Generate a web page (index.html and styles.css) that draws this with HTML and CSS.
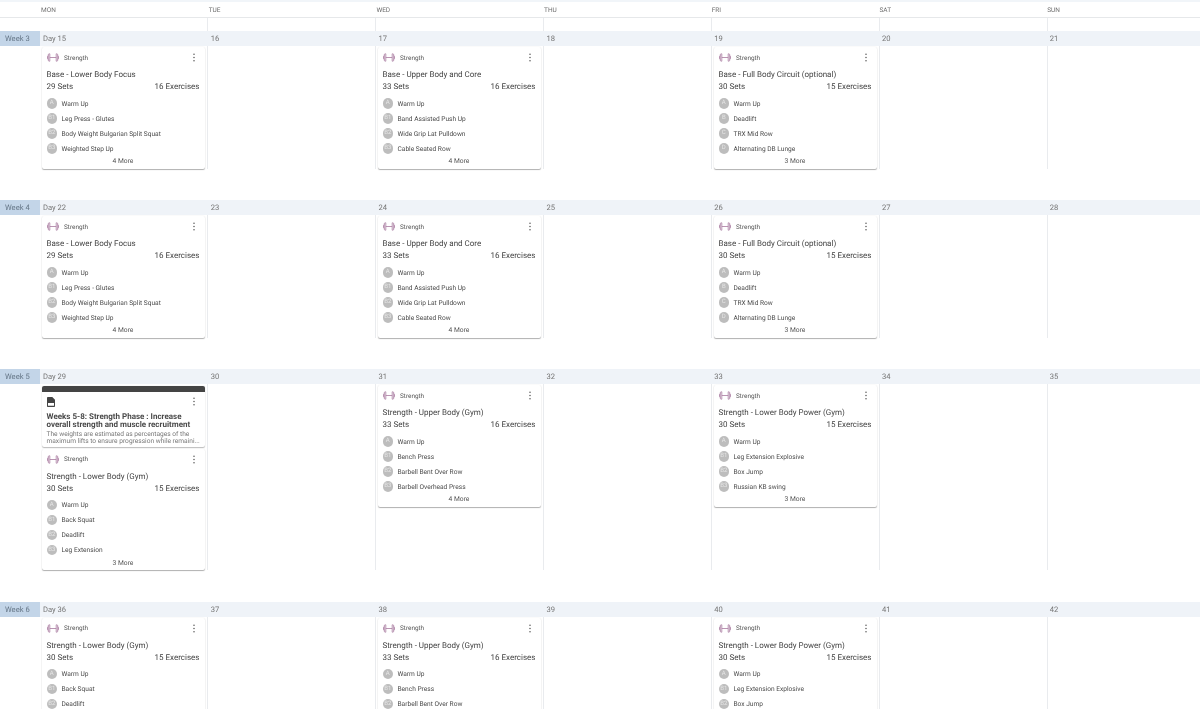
FILE: index.html
```html
<!DOCTYPE html>
<html lang="en">
<head>
<meta charset="utf-8">
<title>Training calendar</title>
<link rel="stylesheet" href="styles.css">
</head>
<body>
<svg class="defs" width="0" height="0" aria-hidden="true">
  <symbol id="bell" viewBox="0 0 12 9">
    <path d="M2.800 .8H2.200C1.500 .8 1.300 1.300 1.300 1.800V7.200C1.300 7.700 1.500 8.200 2.200 8.200H2.800V.8ZM1.300 2.800C.7 2.800 .5 3.200 .5 3.600V5.400C.5 5.800 .7 6.200 1.300 6.200M9.200 .8H9.800C10.500 .8 10.700 1.300 10.700 1.800V7.200C10.700 7.700 10.500 8.200 9.800 8.200H9.200V.8ZM10.700 2.800C11.300 2.800 11.500 3.200 11.500 3.600V5.400C11.500 5.800 11.300 6.200 10.700 6.200M2.800 4.500H9.200" fill="none" stroke="currentColor" stroke-width=".8"/>
  </symbol>
  <symbol id="kebab" viewBox="0 0 4 12">
    <circle cx="2" cy="1.600" r="1"/><circle cx="2" cy="6" r="1"/><circle cx="2" cy="10.400" r="1"/>
  </symbol>
  <symbol id="doc" viewBox="0 0 8 10">
    <path d="M.8 0H5.300L8 2.700V9.200C8 9.700 7.700 10 7.200 10H.8C.3 10 0 9.700 0 9.200V.8C0 .3 .3 0 .8 0ZM1 6V8.800H7V6Z" fill-rule="evenodd"/>
  </symbol>
</svg>

<div class="head">
  <div></div>
  <div class="day-name">Mon</div><div class="day-name">Tue</div><div class="day-name">Wed</div><div class="day-name">Thu</div><div class="day-name">Fri</div><div class="day-name">Sat</div><div class="day-name">Sun</div>
</div>
<div class="gap"><div></div><div class="c"></div><div class="c lined"></div><div class="c lined"></div><div class="c lined"></div><div class="c lined"></div><div class="c lined"></div><div class="c lined"></div></div>

<section class="week">
  <div class="bar"><div class="wk">Week 3</div><div class="dn">Day 15</div><div class="dn">16</div><div class="dn">17</div><div class="dn">18</div><div class="dn">19</div><div class="dn">20</div><div class="dn">21</div></div>
  <div class="body">
    <div></div>
    <div class="c">
      <article class="card"><div class="top"><svg class="bell"><use href="#bell"/></svg><span>Strength</span><svg class="kebab"><use href="#kebab"/></svg></div><h3>Base - Lower Body Focus</h3><div class="meta"><span>29 Sets</span><span>16 Exercises</span></div><ul><li><b>A</b>Warm Up</li><li><b>B1</b>Leg Press - Glutes</li><li><b>B2</b>Body Weight Bulgarian Split Squat</li><li><b>B3</b>Weighted Step Up</li></ul><p class="more">4 More</p></article>
    </div>
    <div class="c lined"></div>
    <div class="c lined">
      <article class="card"><div class="top"><svg class="bell"><use href="#bell"/></svg><span>Strength</span><svg class="kebab"><use href="#kebab"/></svg></div><h3>Base - Upper Body and Core</h3><div class="meta"><span>33 Sets</span><span>16 Exercises</span></div><ul><li><b>A</b>Warm Up</li><li><b>B1</b>Band Assisted Push Up</li><li><b>B2</b>Wide Grip Lat Pulldown</li><li><b>B3</b>Cable Seated Row</li></ul><p class="more">4 More</p></article>
    </div>
    <div class="c lined"></div>
    <div class="c lined">
      <article class="card"><div class="top"><svg class="bell"><use href="#bell"/></svg><span>Strength</span><svg class="kebab"><use href="#kebab"/></svg></div><h3>Base - Full Body Circuit (optional)</h3><div class="meta"><span>30 Sets</span><span>15 Exercises</span></div><ul><li><b>A</b>Warm Up</li><li><b>B</b>Deadlift</li><li><b>C</b>TRX Mid Row</li><li><b>D</b>Alternating DB Lunge</li></ul><p class="more">3 More</p></article>
    </div>
    <div class="c lined"></div>
    <div class="c lined"></div>
  </div>
</section>

<section class="week">
  <div class="bar"><div class="wk">Week 4</div><div class="dn">Day 22</div><div class="dn">23</div><div class="dn">24</div><div class="dn">25</div><div class="dn">26</div><div class="dn">27</div><div class="dn">28</div></div>
  <div class="body">
    <div></div>
    <div class="c">
      <article class="card"><div class="top"><svg class="bell"><use href="#bell"/></svg><span>Strength</span><svg class="kebab"><use href="#kebab"/></svg></div><h3>Base - Lower Body Focus</h3><div class="meta"><span>29 Sets</span><span>16 Exercises</span></div><ul><li><b>A</b>Warm Up</li><li><b>B1</b>Leg Press - Glutes</li><li><b>B2</b>Body Weight Bulgarian Split Squat</li><li><b>B3</b>Weighted Step Up</li></ul><p class="more">4 More</p></article>
    </div>
    <div class="c lined"></div>
    <div class="c lined">
      <article class="card"><div class="top"><svg class="bell"><use href="#bell"/></svg><span>Strength</span><svg class="kebab"><use href="#kebab"/></svg></div><h3>Base - Upper Body and Core</h3><div class="meta"><span>33 Sets</span><span>16 Exercises</span></div><ul><li><b>A</b>Warm Up</li><li><b>B1</b>Band Assisted Push Up</li><li><b>B2</b>Wide Grip Lat Pulldown</li><li><b>B3</b>Cable Seated Row</li></ul><p class="more">4 More</p></article>
    </div>
    <div class="c lined"></div>
    <div class="c lined">
      <article class="card"><div class="top"><svg class="bell"><use href="#bell"/></svg><span>Strength</span><svg class="kebab"><use href="#kebab"/></svg></div><h3>Base - Full Body Circuit (optional)</h3><div class="meta"><span>30 Sets</span><span>15 Exercises</span></div><ul><li><b>A</b>Warm Up</li><li><b>B</b>Deadlift</li><li><b>C</b>TRX Mid Row</li><li><b>D</b>Alternating DB Lunge</li></ul><p class="more">3 More</p></article>
    </div>
    <div class="c lined"></div>
    <div class="c lined"></div>
  </div>
</section>

<section class="week">
  <div class="bar"><div class="wk">Week 5</div><div class="dn">Day 29</div><div class="dn">30</div><div class="dn">31</div><div class="dn">32</div><div class="dn">33</div><div class="dn">34</div><div class="dn">35</div></div>
  <div class="body">
    <div></div>
    <div class="c">
      <article class="note"><div class="note-top"><svg class="doc"><use href="#doc"/></svg><svg class="kebab"><use href="#kebab"/></svg></div><h4>Weeks 5-8: Strength Phase : Increase overall strength and muscle recruitment</h4><p>The weights are estimated as percentages of the<br>maximum lifts to ensure progression while remaini...</p></article>
      <article class="card"><div class="top"><svg class="bell"><use href="#bell"/></svg><span>Strength</span><svg class="kebab"><use href="#kebab"/></svg></div><h3>Strength - Lower Body (Gym)</h3><div class="meta"><span>30 Sets</span><span>15 Exercises</span></div><ul><li><b>A</b>Warm Up</li><li><b>B1</b>Back Squat</li><li><b>B2</b>Deadlift</li><li><b>B3</b>Leg Extension</li></ul><p class="more">3 More</p></article>
    </div>
    <div class="c lined"></div>
    <div class="c lined">
      <article class="card"><div class="top"><svg class="bell"><use href="#bell"/></svg><span>Strength</span><svg class="kebab"><use href="#kebab"/></svg></div><h3>Strength - Upper Body (Gym)</h3><div class="meta"><span>33 Sets</span><span>16 Exercises</span></div><ul><li><b>A</b>Warm Up</li><li><b>B1</b>Bench Press</li><li><b>B2</b>Barbell Bent Over Row</li><li><b>B3</b>Barbell Overhead Press</li></ul><p class="more">4 More</p></article>
    </div>
    <div class="c lined"></div>
    <div class="c lined">
      <article class="card"><div class="top"><svg class="bell"><use href="#bell"/></svg><span>Strength</span><svg class="kebab"><use href="#kebab"/></svg></div><h3>Strength - Lower Body Power (Gym)</h3><div class="meta"><span>30 Sets</span><span>15 Exercises</span></div><ul><li><b>A</b>Warm Up</li><li><b>B1</b>Leg Extension Explosive</li><li><b>B2</b>Box Jump</li><li><b>B3</b>Russian KB swing</li></ul><p class="more">3 More</p></article>
    </div>
    <div class="c lined"></div>
    <div class="c lined"></div>
  </div>
</section>

<section class="week">
  <div class="bar"><div class="wk">Week 6</div><div class="dn">Day 36</div><div class="dn">37</div><div class="dn">38</div><div class="dn">39</div><div class="dn">40</div><div class="dn">41</div><div class="dn">42</div></div>
  <div class="body">
    <div></div>
    <div class="c">
      <article class="card"><div class="top"><svg class="bell"><use href="#bell"/></svg><span>Strength</span><svg class="kebab"><use href="#kebab"/></svg></div><h3>Strength - Lower Body (Gym)</h3><div class="meta"><span>30 Sets</span><span>15 Exercises</span></div><ul><li><b>A</b>Warm Up</li><li><b>B1</b>Back Squat</li><li><b>B2</b>Deadlift</li><li><b>B3</b>Leg Extension</li></ul><p class="more">3 More</p></article>
    </div>
    <div class="c lined"></div>
    <div class="c lined">
      <article class="card"><div class="top"><svg class="bell"><use href="#bell"/></svg><span>Strength</span><svg class="kebab"><use href="#kebab"/></svg></div><h3>Strength - Upper Body (Gym)</h3><div class="meta"><span>33 Sets</span><span>16 Exercises</span></div><ul><li><b>A</b>Warm Up</li><li><b>B1</b>Bench Press</li><li><b>B2</b>Barbell Bent Over Row</li><li><b>B3</b>Barbell Overhead Press</li></ul><p class="more">4 More</p></article>
    </div>
    <div class="c lined"></div>
    <div class="c lined">
      <article class="card"><div class="top"><svg class="bell"><use href="#bell"/></svg><span>Strength</span><svg class="kebab"><use href="#kebab"/></svg></div><h3>Strength - Lower Body Power (Gym)</h3><div class="meta"><span>30 Sets</span><span>15 Exercises</span></div><ul><li><b>A</b>Warm Up</li><li><b>B1</b>Leg Extension Explosive</li><li><b>B2</b>Box Jump</li><li><b>B3</b>Russian KB swing</li></ul><p class="more">3 More</p></article>
    </div>
    <div class="c lined"></div>
    <div class="c lined"></div>
  </div>
</section>
</body>
</html>
```

FILE: styles.css
```css
* { box-sizing: border-box; }
html { height: 709px; overflow: hidden; background: #fff; }
body {
  margin: 0;
  height: 709px;
  overflow: hidden;
  background: #fff;
  color: #444;
  font-family: Roboto, "Liberation Sans", sans-serif;
  font-size: 8px;
  text-rendering: geometricPrecision;
  filter: blur(0.4px);
}
.defs { position: absolute; }

.head, .gap, .bar, .body {
  display: grid;
  grid-template-columns: 40px repeat(7, 168px);
  width: 1216px;
}
.head {
  grid-template-columns: 40px repeat(7, 167.7px);
  height: 18px;
  align-items: center;
  border-top: 2px solid #f1f5f9;
  border-bottom: 1px solid #e6e8ea;
}
.day-name {
  padding-left: 1px;
  font-size: 6.500px;
  color: #6f6f6f;
  text-transform: uppercase;
}
.gap { height: 13px; }
.lined { border-left: 1px solid #e9ebee; margin-left: -1px; padding-left: 2px; }

.bar {
  grid-template-columns: 40px repeat(7, 167.8px);
  height: 15px;
  background: #eff3f8;
  align-items: center;
  color: #777;
  font-size: 7.600px;
}
.wk {
  height: 15px;
  line-height: 15px;
  padding-left: 5px;
  background: #c3d5e8;
  color: #667788;
}
.dn { padding-left: 3px; }

.body { padding-bottom: 31.500px; }
.c { min-width: 0; padding-top: 1px; display: flex; flex-direction: column; gap: 2px; }
.c:not(.lined) { padding-left: 2px; }

.card {
  flex: none;
  width: 162.500px;
  height: 121.500px;
  background: #fff;
  border-radius: 2px;
  box-shadow: 0 1px 1px rgba(0,0,0,.3), 0 0 2px rgba(0,0,0,.07);
  padding: 0 5px 0 4.500px;
}
.top {
  display: flex;
  align-items: center;
  height: 21px;
  font-size: 6.400px;
  color: #555;
}
.bell { width: 12px; height: 9px; color: #a87aa0; margin: 0 5.500px 0 0; }
.kebab { width: 4px; height: 9px; margin-left: auto; margin-right: 4px; fill: #555; }

.card h3 {
  margin: 0;
  height: 12px;
  line-height: 13px;
  font-size: 8px;
  font-weight: 400;
  color: #444;
  white-space: nowrap;
}
.meta {
  display: flex;
  justify-content: space-between;
  height: 13px;
  line-height: 13px;
  font-size: 8px;
  color: #444;
}
.card ul { list-style: none; margin: 3px 0 0; padding: 0; }
.card li {
  display: flex;
  align-items: center;
  height: 15px;
  font-size: 6.600px;
  color: #4a4a4a;
  white-space: nowrap;
}
.card li b {
  flex: none;
  width: 10.500px;
  height: 10.500px;
  line-height: 10.500px;
  border-radius: 50%;
  background: #bdbdbd;
  color: #e6e6e6;
  font-size: 6px;
  font-weight: 400;
  text-align: center;
  margin-right: 4.500px;
}
.more {
  margin: 0;
  height: 10px;
  line-height: 10px;
  font-size: 6.700px;
  text-align: center;
  color: #555;
}

.note {
  flex: none;
  width: 162.500px;
  height: 60.500px;
  margin-top: 1px;
  background: #fff;
  border-top: 6px solid #444;
  border-radius: 2px;
  box-shadow: 0 1px 1px rgba(0,0,0,.25), 0 0 2px rgba(0,0,0,.07);
  padding: 0 5px 0 4.500px;
  overflow: hidden;
}
.note-top { display: flex; align-items: flex-start; height: 21px; padding-top: 4.500px; }
.doc { width: 8px; height: 10px; fill: #444; }
.note h4 {
  margin: 0 0 2px;
  font-size: 8px;
  line-height: 8px;
  font-weight: 700;
  color: #4a4a4a;
}
.note p {
  margin: 0;
  font-size: 6.600px;
  line-height: 6.500px;
  color: #777;
  white-space: nowrap;
}
```
